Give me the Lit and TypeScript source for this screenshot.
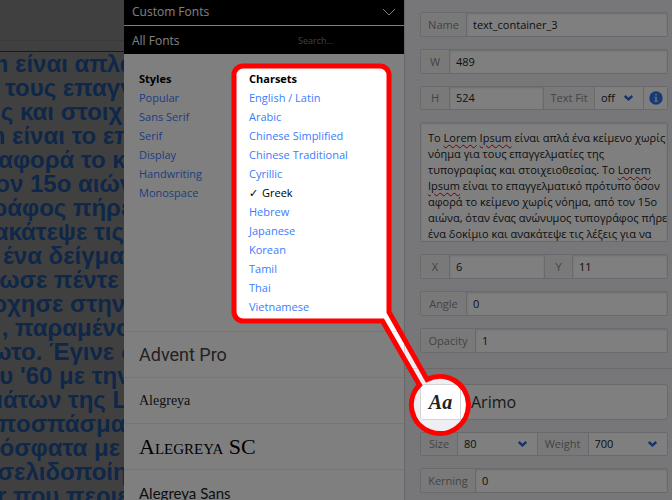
import { LitElement, html, css, svg } from "lit";
import { customElement } from "lit/decorators.js";

const STYLES = ["Popular", "Sans Serif", "Serif", "Display", "Handwriting", "Monospace"];
const CHARSETS = [
  "English / Latin", "Arabic", "Chinese Simplified", "Chinese Traditional", "Cyrillic", "Greek",
  "Hebrew", "Japanese", "Korean", "Tamil", "Thai", "Vietnamese",
];
const FONTS = [
  { name: "Advent Pro", look: "advent" },
  { name: "Alegreya", look: "alegreya" },
  { name: "Alegreya SC", look: "caps" },
  { name: "Alegreya Sans", look: "sans" },
];

/* Each canvas line: the part that runs out of view on the left, where the rest starts, the rest. */
const CANVAS_LINES: [string, number, string][] = [
  ["m ", 15, "είναι απλά"],
  ["", 5, "τους επαγγ"],
  ["ς ", 20, "και στοιχ"],
  ["m ", 12, "είναι το επ"],
  ["αφορά ", 81, "το κ"],
  ["τον ", 30, "15ο αιών"],
  ["ράφος ", 73, "πήρε"],
  ["ακάτεψε ", 94, "τις"],
  ["", 3, "ένα δείγμα"],
  ["ωσε ", 54, "πέντε"],
  ["ρχησε ", 70, "στην"],
  [", ", 15, "παραμένο"],
  ["ωτο. ", 49, "Έγινε δ"],
  ["ου ", 20, "'60 με την"],
  ["μάτων ", 68, "της L"],
  ["π", 16, "οσπάσματ"],
  ["όσφατα ", 94, "με"],
  ["σ", 14, "ελιδοποίη"],
  ["r ", 13, "που περιε"],
];
const BODY_LINES = [
  "Το Lorem Ipsum είναι απλά ένα κείμενο χωρίς",
  "νόημα για τους επαγγελματίες της",
  "τυπογραφίας και στοιχειοθεσίας. Το Lorem",
  "Ipsum είναι το επαγγελματικό πρότυπο όσον",
  "αφορά το κείμενο χωρίς νόημα, από τον 15ο",
  "αιώνα, όταν ένας ανώνυμος τυπογράφος πήρε",
  "ένα δοκίμιο και ανακάτεψε τις λέξεις για να",
];

@customElement("text-canvas")
class TextCanvas extends LitElement {
  static styles = css`
    :host { display: block; overflow: hidden; background: #808080; min-width: 0; }
    .strip { height: 40px; border-bottom: 1px solid #747474; }
    .gap { height: 10px; border-bottom: 1px solid #17356f; }
    .line {
      display: flex; white-space: pre; color: #1e4e90;
      font: bold 24px/24px "Liberation Sans", Arial, sans-serif;
    }
    .head { display: flex; justify-content: flex-end; flex: none; }
  `;
  render() {
    return html`
      <div class="strip"></div>
      <div class="gap"></div>
      ${CANVAS_LINES.map(([head, start, tail]) => html`<div class="line"><span class="head" style="width:${start}px">${head}</span><span>${tail}</span></div>`)}
    `;
  }
}

@customElement("font-panel")
class FontPanel extends LitElement {
  static styles = css`
    :host { display: block; background: #fff; overflow: hidden; }
    * { box-sizing: border-box; }
    .bar {
      display: flex; align-items: center; justify-content: space-between;
      width: 100%; padding: 0 8px; border: 0; background: #000; color: #fff;
      font: 12px/16px "Open Sans", "Noto Sans", sans-serif; text-align: left;
    }
    .custom { height: 26px; padding-bottom: 2px; border-bottom: 1px solid #fff; }
    .all { height: 28px; padding-top: 2px; }
    .search {
      width: 98px; padding: 0; border: 0; background: none; outline: 0; color: #fff;
      font: 9px/16px "Open Sans", "Noto Sans", sans-serif;
    }
    .search::placeholder { color: #808080; opacity: 1; }
    .filters { display: flex; padding: 15px; font-size: 11px; line-height: 19px; }
    .filters ul { list-style: none; margin: 0; padding: 0; width: 110px; white-space: nowrap; }
    h2 { margin: 0; font-size: 11px; line-height: 19px; font-weight: 700; color: #000; }
    a { color: #3b7cff; text-decoration: none; }
    a.on { color: #000; }
    .tick { margin-right: 4px; }
    .fonts { margin: 0; padding: 0; list-style: none; color: #222; }
    .fonts li {
      display: flex; align-items: center; height: 46px; padding: 0 15px;
      border-top: 1px solid #ececec; white-space: nowrap;
    }
    .advent { font: 18px Roboto, sans-serif; color: #444; }
    .alegreya { font: 14px "Liberation Serif", serif; }
    .caps { font: 22px "Liberation Serif", serif; font-variant: small-caps; color: #000; }
    .sans { font: 15px Lato, sans-serif; }
  `;
  render() {
    return html`
      <button class="bar custom">Custom Fonts
        <svg width="14" height="8" viewBox="0 0 14 8" fill="none" stroke="#fff"><path d="M1 1l6 6 6-6" /></svg>
      </button>
      <div class="bar all">
        <span>All Fonts</span>
        <input class="search" type="text" placeholder="Search..." aria-label="Search fonts" />
      </div>
      <div class="filters">
        <section>
          <h2>Styles</h2>
          <ul>${STYLES.map((s) => html`<li><a href="#">${s}</a></li>`)}</ul>
        </section>
        <section>
          <h2>Charsets</h2>
          <ul>${CHARSETS.map((c) => c === "Greek"
            ? html`<li><a class="on" href="#"><span class="tick">✓</span>${c}</a></li>`
            : html`<li><a href="#">${c}</a></li>`)}</ul>
        </section>
      </div>
      <ul class="fonts">${FONTS.map((f) => html`<li><span class=${f.look}>${f.name}</span></li>`)}</ul>
    `;
  }
}

const fieldStyles = css`
  * { box-sizing: border-box; }
  .tag {
    display: flex; align-items: center; justify-content: center; flex: none;
    background: #f2f2f4; color: #88888c; border-right: 1px solid #d4d4d8;
  }
  .tag.follow { border-left: 1px solid #d4d4d8; }
  .w29 { width: 29px; }
  .w37 { width: 37px; }
  .w46 { width: 46px; }
  .w52 { width: 52px; }
  .w55 { width: 55px; }
  input, select, textarea {
    font: inherit; color: #222; border: 0; border-radius: 0; outline: 0; margin: 0; background: none;
  }
  input { flex: 1; width: 0; min-width: 0; padding: 0 6px; background: #fff; box-shadow: inset 0 1px 2px #d8d8dc; }
`;

@customElement("property-panel")
class PropertyPanel extends LitElement {
  static styles = [fieldStyles, css`
    :host {
      display: block; background: #efeef3; border-left: 1px solid #d0d0d4;
      font: 11px/16px "Open Sans", "Noto Sans", sans-serif; overflow: hidden;
    }
    .group { display: flex; flex-direction: column; gap: 12px; padding: 12px 4px 15px 15px; }
    .type { border-top: 1px solid #d4d4d8; padding-top: 15px; }
    .row {
      display: flex; height: 25px; border: 1px solid #d4d4d8; border-radius: 2px; overflow: hidden;
      background: #fff;
    }
    .low { height: 24px; }
    .drop { display: grid; flex: 1; align-items: center; }
    .drop > * { grid-area: 1 / 1; }
    .drop select { appearance: none; width: 100%; height: 100%; padding: 0 6px; }
    .drop svg { justify-self: end; margin-right: 10px; pointer-events: none; }
    .narrow { flex: none; width: 48px; }
    .info {
      display: flex; align-items: center; justify-content: center; width: 24px; padding: 0;
      border: 0; border-left: 1px solid #d4d4d8; background: #fff;
    }
    .body {
      display: grid; height: 120px; border: 1px solid #d4d4d8; border-radius: 2px; overflow: hidden;
      background: #fff; box-shadow: inset 0 1px 2px #d8d8dc;
    }
    .body > * { grid-area: 1 / 1; padding: 7px 0 0 7px; line-height: 16px; white-space: pre; overflow: hidden; }
    .marks { color: transparent; }
    .marks u { text-decoration: underline wavy #e00000 1px; text-underline-offset: 2px; }
    textarea { resize: none; width: 100%; height: 100%; }
    .face { height: 36px; border-radius: 3px; align-items: stretch; }
    .pick {
      width: 40px; padding: 0; border: 0; border-right: 1px solid #d4d4d8; background: #fff; color: #222;
      font: italic bold 20px "Liberation Serif", serif;
    }
    .name { flex: 1; display: flex; align-items: center; padding: 0 10px; font-size: 16px; color: #333; }
  `];

  private chevron() {
    return html`<svg width="9" height="6" viewBox="0 0 9 6" fill="none" stroke="#3068d8" stroke-width="2.4"><path d="M.8 1l3.7 3.4L8.2 1" /></svg>`;
  }

  private marked(line: string) {
    return line.split(/(Lorem|Ipsum)/).map((p) => (p === "Lorem" || p === "Ipsum" ? html`<u>${p}</u>` : p));
  }

  private single(label: string, id: string, value: string, width: string) {
    return html`<div class="row">
      <label class="tag ${width}" for=${id}>${label}</label><input id=${id} .value=${value} />
    </div>`;
  }

  render() {
    return html`
      <div class="group">
        ${this.single("Name", "name", "text_container_3", "w46")}
        ${this.single("W", "w", "489", "w29")}
        <div class="row low">
          <label class="tag w29" for="h">H</label><input id="h" .value=${"524"} />
          <label class="tag follow w52" for="fit">Text Fit</label>
          <div class="drop narrow"><select id="fit"><option>off</option></select>${this.chevron()}</div>
          <button class="info" aria-label="About text fit">
            <svg width="14" height="14" viewBox="0 0 14 14"><circle cx="7" cy="7" r="6.7" fill="#2f74ee" /><path d="M6 2.8h2v1.8H6zM5.2 5.8H8v4h.9v1.3H5.2V9.800H6V7.100h-.8z" fill="#b8c8e8" /></svg>
          </button>
        </div>
        <div class="body">
          <div class="marks" aria-hidden="true">${BODY_LINES.map((l, i) => [i ? "\n" : "", this.marked(l)])}</div>
          <textarea aria-label="Text" spellcheck="false" .value=${BODY_LINES.join("\n")}></textarea>
        </div>
        <div class="row">
          <label class="tag w29" for="x">X</label><input id="x" .value=${"6"} />
          <label class="tag follow w29" for="y">Y</label><input id="y" .value=${"11"} />
        </div>
        ${this.single("Angle", "angle", "0", "w46")}
        ${this.single("Opacity", "opacity", "1", "w55")}
      </div>
      <div class="group type">
        <div class="row face">
          <button class="pick" aria-label="Choose font">Aa</button><span class="name">Arimo</span>
        </div>
        <div class="row low">
          <label class="tag w37" for="size">Size</label>
          <div class="drop"><select id="size"><option>80</option></select>${this.chevron()}</div>
          <label class="tag follow w52" for="weight">Weight</label>
          <div class="drop"><select id="weight"><option>700</option></select>${this.chevron()}</div>
        </div>
        ${this.single("Kerning", "kerning", "0", "w55")}
      </div>
    `;
  }
}

const SPOT =
  "M243 66H380A9 9 0 0 1 389 75V312L427 379.500A28.500 28.500 0 1 1 419.500 385L382.500 321H243A9 9 0 0 1 234 312V75A9 9 0 0 1 243 66Z";

@customElement("app-root")
class AppRoot extends LitElement {
  static styles = css`
    :host {
      position: relative; display: grid; grid-template-columns: minmax(0, 1fr) 280px 268px;
      height: 100vh; overflow: hidden;
      font: 11px/16px "Open Sans", "Noto Sans", sans-serif;
    }
    .spotlight { position: absolute; top: 0; right: 0; overflow: visible; pointer-events: none; }
  `;
  render() {
    return html`
      <text-canvas></text-canvas>
      <font-panel></font-panel>
      <property-panel></property-panel>
      <svg class="spotlight" width="548" height="500" viewBox="124 0 548 500" aria-hidden="true">
        ${svg`<path d="M-4000 0H672V4000H-4000Z ${SPOT}" fill="#000" fill-opacity=".5" fill-rule="evenodd" />
        <path d=${SPOT} fill="none" stroke="#f00" stroke-width="5" />`}
      </svg>
    `;
  }
}
